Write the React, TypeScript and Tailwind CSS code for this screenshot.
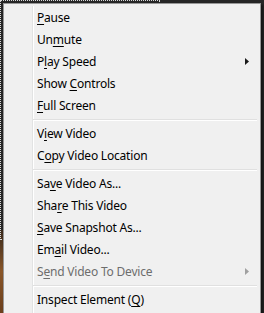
import type { ReactNode } from 'react';

type Item = {
  label: ReactNode;
  submenu?: boolean;
  disabled?: boolean;
};

const k = (c: string) => <span className="underline underline-offset-[2px]">{c}</span>;

const groups: Item[][] = [
  [
    { label: <>{k('P')}ause</> },
    { label: <>Un{k('m')}ute</> },
    { label: <>P{k('l')}ay Speed</>, submenu: true },
    { label: <>Show {k('C')}ontrols</> },
    { label: <>{k('F')}ull Screen</> },
  ],
  [
    { label: <>V{k('i')}ew Video</> },
    { label: <>C{k('o')}py Video Location</> },
  ],
  [
    { label: <>Sa{k('v')}e Video As...</> },
    { label: <>Sha{k('r')}e This Video</> },
    { label: <>{k('S')}ave Snapshot As...</> },
    { label: <>Em{k('a')}il Video...</> },
    { label: <>S{k('e')}nd Video To Device</>, submenu: true, disabled: true },
  ],
  [{ label: <>Inspect Element ({k('Q')})</> }],
];

function Arrow({ disabled }: { disabled?: boolean }) {
  return (
    <svg width="4" height="7" viewBox="0 0 4 7" className="mr-[9px]">
      <path d="M0 0 L4 3.5 L0 7 Z" fill={disabled ? '#a0a0a0' : '#1a1a1a'} />
    </svg>
  );
}

function Separator() {
  return (
    <div className="h-[6px] pt-[3px] ml-[27px] mr-[1px]">
      <div className="h-px bg-[#e0e0e0]" />
      <div className="h-px bg-white" />
    </div>
  );
}

export default function App() {
  return (
    <div className="relative w-[264px] h-[313px] overflow-hidden bg-[#262626]">
      {/* video behind the menu */}
      <div className="absolute left-0 top-[230px] w-[3px] h-[83px] bg-gradient-to-b from-[#3a2a1c] via-[#8a5628] to-[#6b3f1c]" />
      <div className="absolute left-0 top-0 w-[160px] h-[240px] border border-dotted border-[#d8d8d8]" />

      {/* context menu */}
      <div
        className="absolute left-[3px] top-[3px] w-[258px] h-[320px] border border-[#979797] bg-[#f0f0f0] p-[2px] shadow-[2px_2px_2px_rgba(0,0,0,0.5)]"
        style={{ fontFamily: '"Noto Sans", "Open Sans", sans-serif' }}
      >
        <div className="absolute left-[28px] top-[2px] bottom-0 w-[2px] flex">
          <div className="w-px bg-[#e2e3e3]" />
          <div className="w-px bg-white" />
        </div>
        <div className="relative">
          {groups.map((group, gi) => (
            <div key={gi}>
              {gi > 0 && <Separator />}
              {group.map((item, i) => (
                <div
                  key={i}
                  className={`h-[22px] flex items-center justify-between pl-[31px] text-[12px] leading-none ${
                    item.disabled ? 'text-[#6d6d6d]' : 'text-black'
                  }`}
                >
                  <span className="pt-[2px] tracking-[-0.2px]">{item.label}</span>
                  {item.submenu && <Arrow disabled={item.disabled} />}
                </div>
              ))}
            </div>
          ))}
        </div>
      </div>
    </div>
  );
}
